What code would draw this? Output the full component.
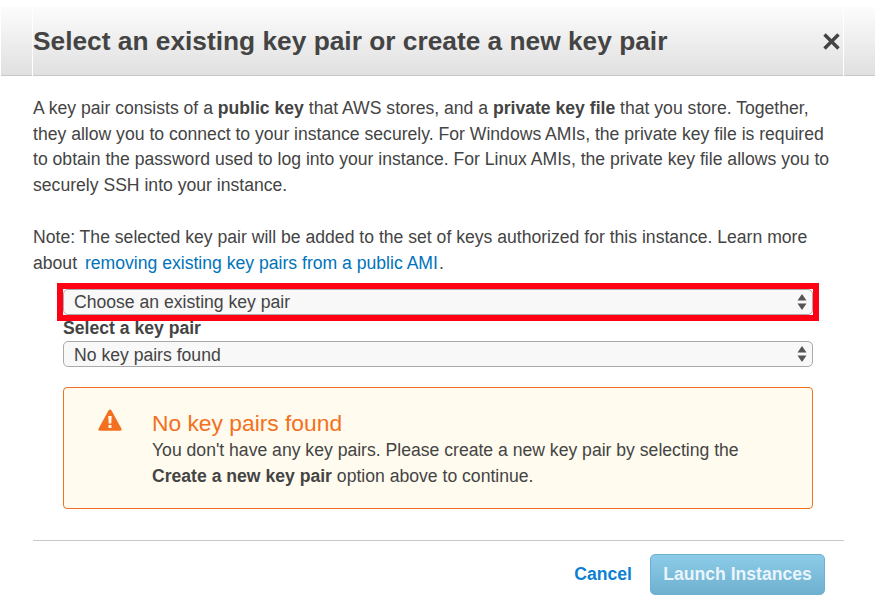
<script>
  let keyMode = "existing";
</script>

<div class="dialog">
  <header class="head">
    <div class="head-side"></div>
    <div class="head-main">
      <h1>Select an existing key pair or create a new key pair</h1>
      <svg class="close" viewBox="0 0 17 17" width="17" height="17" aria-label="Close">
        <path d="M1.500 1.500 15.500 15.500M15.500 1.500 1.500 15.500" stroke="#444" stroke-width="3.400" fill="none" />
      </svg>
    </div>
    <div class="head-side"></div>
  </header>

  <div class="body">
    <p class="intro">
      A key pair consists of a <b>public key</b> that AWS stores, and a <b>private key file</b> that you store. Together,
      they allow you to connect to your instance securely. For Windows AMIs, the private key file is required
      to obtain the password used to log into your instance. For Linux AMIs, the private key file allows you to
      securely SSH into your instance.
    </p>
    <p class="note">
      Note: The selected key pair will be added to the set of keys authorized for this instance. Learn more
      about <a href="#top">removing existing key pairs from a public AMI</a>.
    </p>
  </div>

  <div class="form">
    <div class="highlight">
      <div class="select">
        <span>{keyMode === "existing" ? "Choose an existing key pair" : "Create a new key pair"}</span>
        <svg viewBox="0 0 10 18" width="10" height="18">
          <path d="M5 1 9.500 7.500H.5ZM5 17 .5 10.500H9.500Z" fill="#555" />
        </svg>
      </div>
    </div>
    <label for="pair">Select a key pair</label>
    <div class="select" id="pair">
      <span>No key pairs found</span>
      <svg viewBox="0 0 10 18" width="10" height="18">
        <path d="M5 1 9.500 7.500H.5ZM5 17 .5 10.500H9.500Z" fill="#555" />
      </svg>
    </div>

    <div class="alert">
      <svg class="warn" viewBox="0 0 24 22" width="24" height="22">
        <path fill-rule="evenodd" fill="#f37021" d="M12 .5c.7 0 1.200.4 1.500 1l10 18.200c.5 1-.2 2-1.300 2H1.800c-1.100 0-1.800-1-1.300-2l10-18.200c.3-.6.800-1 1.500-1ZM10.300 7l.4 7.500h2.600l.4-7.500ZM10.500 16v3h3v-3Z" />
      </svg>
      <div class="alert-text">
        <h2>No key pairs found</h2>
        <p>You don't have any key pairs. Please create a new key pair by selecting the</p>
        <p><b>Create a new key pair</b> option above to continue.</p>
      </div>
    </div>
  </div>

  <footer class="foot">
    <a class="cancel" href="#top">Cancel</a>
    <button class="launch" disabled>Launch Instances</button>
  </footer>
</div>

<style>
  :global(body) {
    margin: 0;
    background: #fff;
  }

  .dialog {
    width: 875px;
    height: 615px;
    overflow: hidden;
    font-family: "Liberation Sans", Arial, sans-serif;
    font-size: 17.6px;
    line-height: 25.7px;
    color: #444;
  }

  .head {
    display: flex;
    margin-top: 7px;
    margin-left: 1px;
    height: 69px;
    gap: 1px;
  }

  .head-side {
    width: 31px;
    background: linear-gradient(#fcfcfc, #e0e0e0);
    border-bottom: 1px solid #c8c8c8;
  }

  .head-main {
    flex: 1;
    display: flex;
    justify-content: space-between;
    align-items: center;
    background: linear-gradient(#fcfcfc, #e0e0e0);
    border-bottom: 1px solid #c8c8c8;
    padding-right: 3px;
  }

  h1 {
    margin: 0;
    padding-top: 2px;
    font-size: 26.3px;
    font-weight: 700;
    color: #444;
  }

  .body {
    padding: 20px 35px 0 33px;
  }

  p {
    margin: 0;
  }

  .intro {
    margin-bottom: 26px;
  }

  a {
    color: #0073bb;
    text-decoration: none;
  }

  .note a {
    margin-left: 3px;
    margin-right: 1px;
  }

  .form {
    margin: 7px 62px 0 63px;
  }

  .highlight {
    margin: 0 -6px;
    border: 6px solid #ff0015;
  }

  .select {
    display: flex;
    align-items: center;
    justify-content: space-between;
    box-sizing: border-box;
    height: 26px;
    padding: 0 5px 0 10px;
    border: 1px solid #aaa;
    border-radius: 5px;
    background: #f8f8f8;
    color: #444;
  }

  .select span {
    padding-top: 2px;
  }

  #pair span {
    padding-top: 3px;
  }

  label {
    display: block;
    height: 20px;
    line-height: 15px;
    font-weight: 700;
  }

  .alert {
    display: flex;
    gap: 30px;
    box-sizing: border-box;
    height: 122px;
    margin-top: 20px;
    padding: 20px 20px 0 34px;
    border: 1px solid #f37021;
    border-radius: 4px;
    background: #fffbee;
  }

  .warn {
    margin-top: 1px;
    flex: none;
  }

  h2 {
    margin: 0;
    font-size: 22.800px;
    font-weight: 400;
    line-height: 30px;
    color: #f37021;
  }

  .foot {
    display: flex;
    justify-content: flex-end;
    align-items: center;
    gap: 18px;
    margin: 31px 31px 0 33px;
    padding: 13px 19px 0 0;
    border-top: 1px solid #c8c8c8;
  }

  .cancel {
    color: #0d7fd3;
    font-weight: 700;
  }

  .launch {
    width: 175px;
    height: 41px;
    padding: 0;
    border: 1px solid #6eb0d0;
    border-radius: 5px;
    background: linear-gradient(#8ccce8, #6fb0d0);
    color: #e9f5fb;
    font: 700 17.6px "Liberation Sans", Arial, sans-serif;
  }
</style>
